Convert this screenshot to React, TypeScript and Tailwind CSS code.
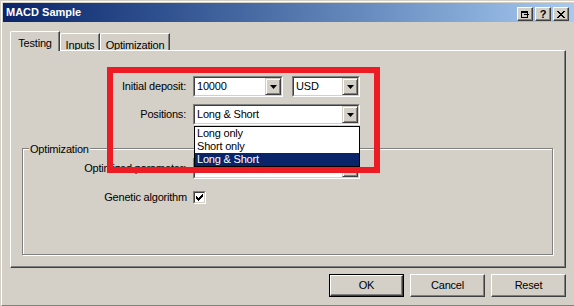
import React from "react";

// ─── Small Win9x pieces ─────────────────────────────

function DropButton() {
  return (
    <div className="flex h-full w-[16px] items-center justify-center border border-t-[#d4d0c8] border-l-[#d4d0c8] border-b-[#404040] border-r-[#404040] bg-[#d4d0c8] shadow-[inset_1px_1px_#ffffff,inset_-1px_-1px_#808080]">
      <svg width="7" height="4" viewBox="0 0 7 4">
        <polygon points="0,0 7,0 3.5,4" fill="#000" />
      </svg>
    </div>
  );
}

function Combo({ value, className }: { value: string; className: string }) {
  return (
    <div
      className={
        "flex h-[21px] border border-t-[#808080] border-l-[#808080] border-r-white border-b-white " +
        className
      }
    >
      <div className="flex flex-1 items-center border border-t-[#404040] border-l-[#404040] border-r-[#d4d0c8] border-b-[#d4d0c8] bg-white">
        <span className="flex-1 truncate pl-[2px] leading-[13px]">{value}</span>
        <DropButton />
      </div>
    </div>
  );
}

function Checkbox() {
  return (
    <div className="h-[13px] w-[13px] border border-t-[#808080] border-l-[#808080] border-r-white border-b-white">
      <div className="flex h-full w-full items-center justify-center border border-t-[#404040] border-l-[#404040] border-r-[#d4d0c8] border-b-[#d4d0c8] bg-white">
        <svg width="7" height="7" viewBox="0 0 7 7" shapeRendering="crispEdges">
          <path d="M6 0h1v3h-1v1h-1v1h-1v1h-1v1h-1v-1h-1v-1h-1v-3h1v1h1v1h1v-1h1v-1h1z" fill="#000" />
        </svg>
      </div>
    </div>
  );
}

function CaptionButton({ children }: { children: React.ReactNode }) {
  return (
    <div className="flex h-[14px] w-[16px] items-center justify-center border border-t-white border-l-white border-b-[#404040] border-r-[#404040] bg-[#d4d0c8] shadow-[inset_-1px_-1px_#808080]">
      {children}
    </div>
  );
}

function PushButton({ label, isDefault }: { label: string; isDefault?: boolean }) {
  if (isDefault) {
    return (
      <div className="h-[23px] w-[75px] border border-black">
        <div className="flex h-full w-full items-center justify-center border border-t-white border-l-white border-b-[#404040] border-r-[#404040] shadow-[inset_-1px_-1px_#808080]">
          {label}
        </div>
      </div>
    );
  }

  return (
    <div className="flex h-[23px] w-[75px] items-center justify-center border border-t-white border-l-white border-b-[#404040] border-r-[#404040] shadow-[inset_-1px_-1px_#808080]">
      {label}
    </div>
  );
}

export default function App() {
  return (
    <div className="relative h-[306px] w-[574px] overflow-hidden bg-[#d4d0c8] font-['Liberation_Sans',Arial,sans-serif] text-[11px] tracking-[-0.2px] text-black">

      {/* Window */}
      <div className="ml-[1px] mt-[1px] flex h-[305px] w-[573px] flex-col border-l border-t border-b border-white border-b-[#808080] pl-[1px] pt-[1px]">

        {/* Title bar */}
        <div className="flex h-[19px] shrink-0 bg-gradient-to-r from-[#0a246a] to-[#a6caf0]">
          <span className="self-center pl-[3px] text-[11px] font-bold leading-[13px] tracking-normal text-white">
            MACD Sample
          </span>

          <div className="ml-auto mr-[5px] mt-[4px] flex gap-[2px]">
            <CaptionButton>
              <svg width="9" height="7" viewBox="0 0 9 7" shapeRendering="crispEdges">
                <path d="M0 0h7v2h-6v4h5v-1h1v2h-7z" fill="#000" />
                <path d="M3 3h3v-1h1v1h1v1h-1v1h-1v-1h-3z" fill="#000" />
              </svg>
            </CaptionButton>
            <CaptionButton>
              <span className="text-[11px] font-bold leading-[11px]">?</span>
            </CaptionButton>
            <CaptionButton>
              <svg width="8" height="7" viewBox="0 0 8 7" shapeRendering="crispEdges">
                <path d="M0 0h2v1h1v1h2v-1h1v-1h2v1h-1v1h-1v1h-1v1h1v1h1v1h1v1h-2v-1h-1v-1h-2v1h-1v1h-2v-1h1v-1h1v-1h1v-1h-1v-1h-1v-1h-1z" fill="#000" />
              </svg>
            </CaptionButton>
          </div>
        </div>

        {/* Content */}
        <div className="flex flex-1 flex-col pl-[7px] pr-[8px] pt-[9px]">

          {/* Tabs */}
          <div className="flex h-[19px] items-end">
            <div className="relative z-10 -mb-[1px] flex h-[20px] w-[50px] items-start justify-center rounded-tl-[2px] border-l border-t border-white border-r border-r-[#404040] bg-[#d4d0c8] pt-[3px] shadow-[inset_-1px_0_#808080]">
              Testing
            </div>
            <div className="flex h-[17px] w-[40px] items-start justify-center rounded-tl-[2px] border-l border-t border-white border-r border-r-[#404040] pt-[3px] shadow-[inset_-1px_0_#808080]">
              Inputs
            </div>
            <div className="flex h-[17px] w-[70px] items-start justify-center rounded-tl-[2px] border-l border-t border-white border-r border-r-[#404040] pt-[3px] shadow-[inset_-1px_0_#808080]">
              Optimization
            </div>
          </div>

          {/* Panel */}
          <div className="h-[218px] border border-t-white border-l-white border-r-[#404040] border-b-[#404040] shadow-[inset_-1px_-1px_#808080]">

            <div className="mt-[25px] flex items-center">
              <span className="w-[175px] text-right">Initial deposit:</span>
              <Combo value="10000" className="ml-[7px] w-[90px]" />
              <Combo value="USD" className="ml-[9px] w-[68px]" />
            </div>

            <div className="mt-[7px] flex items-center">
              <span className="w-[175px] text-right">Positions:</span>
              <div className="relative ml-[7px] w-[167px]">
                <Combo value="Long & Short" className="w-full" />

                {/* Open list */}
                <div className="absolute left-[1px] right-0 top-[22px] z-20 border border-black bg-white leading-[13px]">
                  <div className="h-[13px] pl-[2px]">Long only</div>
                  <div className="h-[13px] pl-[2px]">Short only</div>
                  <div className="h-[13px] bg-[#0a246a] pl-[2px] text-white">Long &amp; Short</div>
                </div>
              </div>
            </div>

            {/* Optimization group */}
            <div className="relative ml-[11px] mt-[23px] h-[107px] w-[531px] border border-[#808080] shadow-[inset_1px_1px_#ffffff,1px_1px_#ffffff]">
              <span className="absolute -top-[6px] left-[6px] bg-[#d4d0c8] px-[1px] leading-[13px]">
                Optimization
              </span>

              <div className="mt-[9px] flex items-center">
                <span className="w-[163px] text-right">Optimized parameter:</span>
                <Combo value="Balance" className="ml-[7px] w-[167px]" />
              </div>

              <div className="mt-[12px] flex h-[13px] items-center">
                <span className="w-[164px] text-right">Genetic algorithm</span>
                <div className="ml-[6px]">
                  <Checkbox />
                </div>
              </div>
            </div>
          </div>

          {/* Footer */}
          <div className="mt-[6px] flex justify-end gap-[6px]">
            <PushButton label="OK" isDefault />
            <PushButton label="Cancel" />
            <PushButton label="Reset" />
          </div>
        </div>
      </div>

      {/* Red highlight */}
      <div className="absolute left-[107px] top-[67px] z-30 h-[106px] w-[273px] border-[6px] border-[#ed1c24]" />
    </div>
  );
}
